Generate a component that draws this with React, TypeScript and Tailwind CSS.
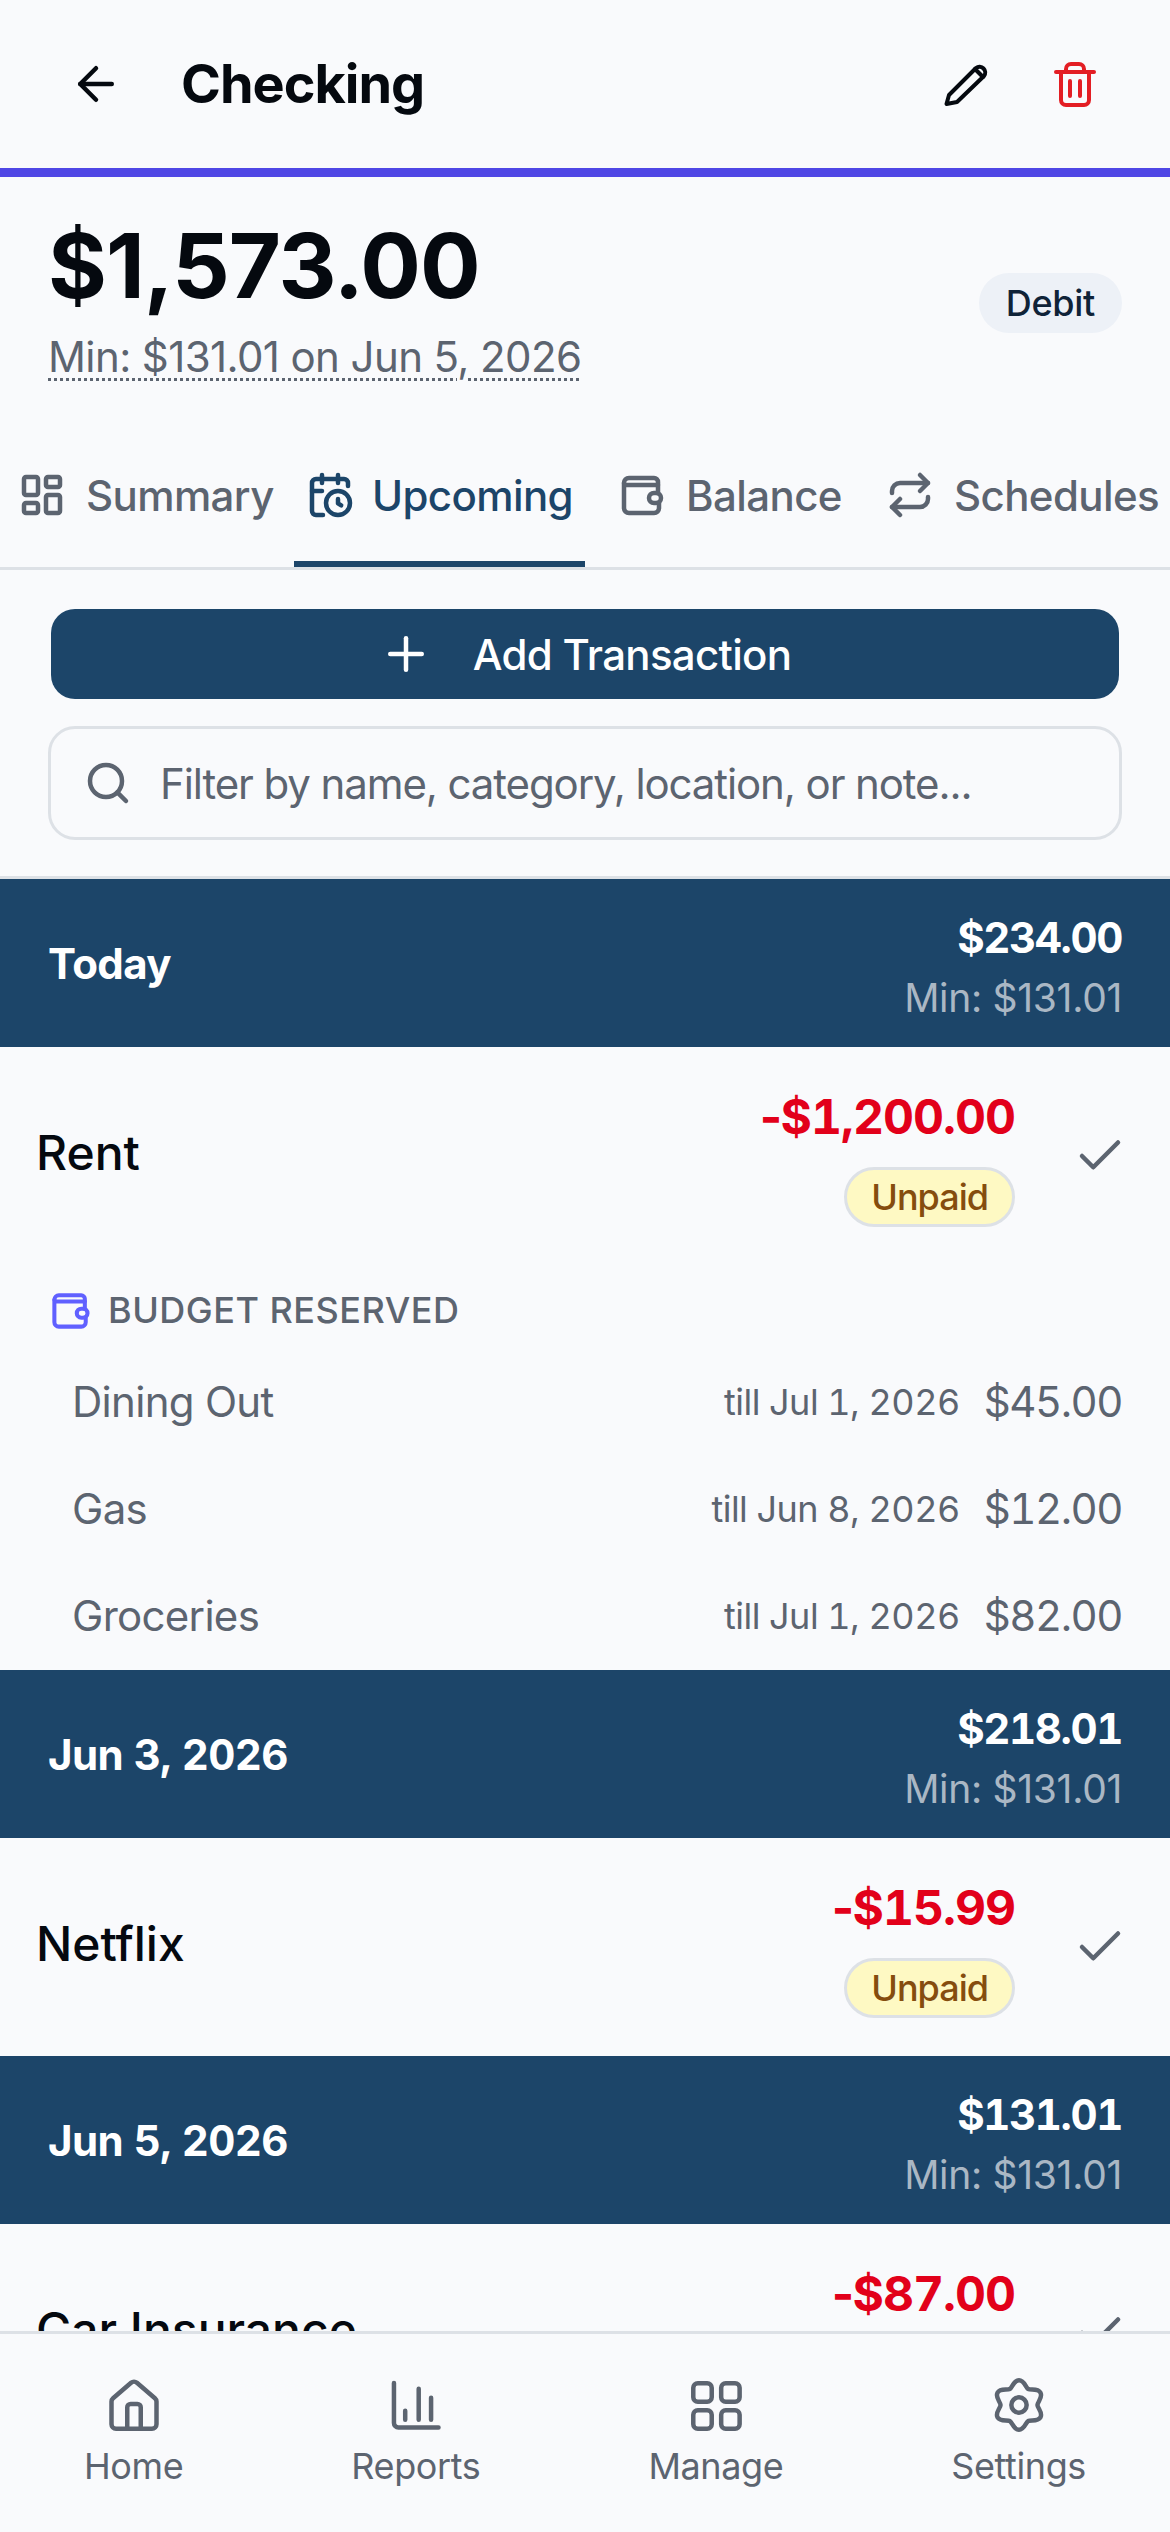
import React from 'react';
import { ArrowLeft, CalendarClock, Check, LayoutDashboard, Plus, Repeat, Search } from 'lucide-react';

const font = { fontFamily: 'Inter, "Noto Sans", sans-serif' };

function Pencil() {
  return (
    <svg width="54" height="54" viewBox="0 0 54 54" fill="none" stroke="currentColor" strokeWidth="4" strokeLinejoin="round" strokeLinecap="round">
      <path d="M7.5 47l2.5-9L37 11a5.7 5.7 0 0 1 8 8L18 45z" />
      <path d="M36 12l8 8" />
    </svg>
  );
}

function Trash() {
  return (
    <svg width="54" height="54" viewBox="0 0 54 54" fill="none" stroke="currentColor" strokeWidth="4" strokeLinecap="round">
      <path d="M8 15h38" />
      <path d="M18 15v-3a5 5 0 0 1 5-5h8a5 5 0 0 1 5 5v3" />
      <path d="M13 15v28a5 5 0 0 0 5 5h18a5 5 0 0 0 5-5V15" />
      <path d="M22 24v15M32 24v15" />
    </svg>
  );
}

function Wallet({ size = 48 }: { size?: number }) {
  return (
    <svg width={size} height={size} viewBox="0 0 24 24" fill="none" stroke="currentColor" strokeWidth="2.25" strokeLinecap="round" strokeLinejoin="round">
      <path d="M3 6a2.5 2.5 0 0 1 2.5-2.5H18A2 2 0 0 1 20 5.500V11" />
      <path d="M3 6v12.500A2.500 2.500 0 0 0 5.500 21H18a2.500 2.500 0 0 0 2.500-2.500V16" />
      <path d="M3.500 7H20" />
      <rect x="15.500" y="11" width="6" height="5" rx="2.500" />
    </svg>
  );
}

function HomeIcon() {
  return (
    <svg width="54" height="54" viewBox="0 0 24 24" fill="none" stroke="currentColor" strokeWidth="2" strokeLinecap="round" strokeLinejoin="round">
      <path d="M2 10.500a2 2 0 0 1 .7-1.500l8-6.900a2 2 0 0 1 2.600 0l8 6.900a2 2 0 0 1 .7 1.500v10a2 2 0 0 1-2 2H4a2 2 0 0 1-2-2z" />
      <path d="M9 22.500V13a1.500 1.500 0 0 1 1.500-1.500h3A1.500 1.500 0 0 1 15 13v9.500" />
    </svg>
  );
}

function ReportsIcon() {
  return (
    <svg width="54" height="54" viewBox="0 0 24 24" fill="none" stroke="currentColor" strokeWidth="2" strokeLinecap="round" strokeLinejoin="round">
      <path d="M2.200 2.200V20a2 2 0 0 0 2 2H22" />
      <path d="M7.200 14.500v4M13.200 4.800v13.700M18.700 8.800v9.700" />
    </svg>
  );
}

function ManageIcon() {
  return (
    <svg width="54" height="54" viewBox="0 0 24 24" fill="none" stroke="currentColor" strokeWidth="2">
      <rect x="1.900" y="2.300" width="8.200" height="8.200" rx="2" />
      <rect x="14.300" y="2.300" width="8.200" height="8.200" rx="2" />
      <rect x="1.900" y="14.300" width="8.200" height="8.200" rx="2" />
      <rect x="14.300" y="14.300" width="8.200" height="8.200" rx="2" />
    </svg>
  );
}

// six lobes, so lucide's Settings doesn't fit
function gearPath() {
  let d = '';
  for (let i = 0; i < 6; i++) {
    const a = (-90 + i * 60) * (Math.PI / 180);
    const v = a + (30 * Math.PI) / 180;
    const n = a + (60 * Math.PI) / 180;
    const p = (r: number, t: number) => [12 + r * Math.cos(t), 12 + r * Math.sin(t)];
    const tan = (t: number, l: number) => [-Math.sin(t) * l, Math.cos(t) * l];
    const tip = p(11, a);
    const val = p(8.2, v);
    const nxt = p(11, n);
    const ta = tan(a, 2.4);
    const tv = tan(v, 1.3);
    const tn = tan(n, 2.4);
    if (i === 0) d += `M${tip[0]} ${tip[1]}`;
    d += `C${tip[0] + ta[0]} ${tip[1] + ta[1]} ${val[0] - tv[0]} ${val[1] - tv[1]} ${val[0]} ${val[1]}`;
    d += `C${val[0] + tv[0]} ${val[1] + tv[1]} ${nxt[0] - tn[0]} ${nxt[1] - tn[1]} ${nxt[0]} ${nxt[1]}`;
  }
  return d + 'Z';
}

function GearIcon() {
  return (
    <svg width="54" height="54" viewBox="0 0 24 24" fill="none" stroke="currentColor" strokeWidth="2">
      <path d={gearPath()} />
      <circle cx="12" cy="12" r="3.400" />
    </svg>
  );
}

function DayHeader({ label, balance }: { label: string; balance: string }) {
  return (
    <div className="flex h-[168px] shrink-0 items-center justify-between pl-[48px] pr-[48px] bg-[#1c4569]">
      <span className="text-[42px] font-bold tabular-nums tracking-[-0.6px] text-white">{label}</span>
      <div className="flex flex-col items-end pt-[6px]">
        <span className="text-[42px] leading-[60px] font-bold tabular-nums tracking-[-1.400px] text-white">{balance}</span>
        <span className="mt-[3px] text-[39px] leading-[54px] tracking-[-0.3px] text-[#aab7c4]">Min: $131.01</span>
      </div>
    </div>
  );
}

function TxRow({ name, amount }: { name: string; amount: string }) {
  return (
    <div className="flex h-[218px] shrink-0 items-center pl-[36px] pr-[43px]">
      <span className="flex-1 pb-[6px] text-[48px] font-medium text-[#05090f]">{name}</span>
      <div className="flex flex-col items-end self-start pt-[34px]">
        <span className="text-[48px] leading-[72px] font-bold tabular-nums tracking-[-1px] text-[#e2001a]">
          <span className="tracking-[-6px]">-</span>
          {amount}
        </span>
        <span className="mt-[14px] flex h-[60px] items-center rounded-full border-[3px] border-[#dde1e6] bg-[#fef9c3] px-[24px] text-[36px] font-medium tracking-[-1px] text-[#854d0e]">Unpaid</span>
      </div>
      <Check size={54} strokeWidth={2} className="ml-[58px] text-[#5c6470]" />
    </div>
  );
}

function ReservedRow({ name, till, amount }: { name: string; till: string; amount: string }) {
  return (
    <div className="flex h-[107px] items-center pl-[72px] pr-[48px] pt-[2px] text-[#5c6470]">
      <span className="flex-1 text-[42px] tracking-[-0.7px]">{name}</span>
      <span className="text-[36px] tabular-nums tracking-[-0.5px]">{till}</span>
      <span className="ml-[24px] text-[42px] tabular-nums tracking-[-1.500px]">{amount}</span>
    </div>
  );
}

function Tab({ icon, label, active, className }: { icon: React.ReactNode; label: string; active?: boolean; className: string }) {
  return (
    <div className={`flex h-full shrink-0 items-center border-b-[6px] pb-[24px] pl-[12px] ${active ? 'border-[#1c4569] text-[#1c4569]' : 'border-transparent text-[#5c6470]'} ${className}`}>
      {icon}
      <span className="text-[42px] font-medium tracking-[-0.6px] whitespace-nowrap">{label}</span>
    </div>
  );
}

function NavItem({ icon, label }: { icon: React.ReactNode; label: string }) {
  return (
    <div className="flex flex-col items-center text-[#5c6470]">
      {icon}
      <span className="mt-[7px] text-[36px] leading-[54px] tracking-[-0.4px]">{label}</span>
    </div>
  );
}

export default function App() {
  return (
    <div className="flex h-[2532px] w-[1170px] flex-col overflow-hidden bg-[#f9fafc] text-[#05090f]" style={font}>
      <header className="flex h-[168px] shrink-0 items-center pl-[69px] pr-[68px]">
        <ArrowLeft size={54} strokeWidth={2} />
        <h1 className="ml-[58px] flex-1 pb-[2px] text-[54px] font-bold tracking-[-1px]">Checking</h1>
        <div className="text-[#05090f]"><Pencil /></div>
        <div className="ml-[55px] text-[#e31e24]"><Trash /></div>
      </header>
      <div className="h-[9px] shrink-0 bg-[#4f46e5]" />

      <section className="flex h-[210px] shrink-0 items-start justify-between px-[48px]">
        <div className="pt-[35px]">
          <div className="text-[90px] leading-[108px] font-bold tracking-[-1px]">$1,573.00</div>
          <div className="mt-[13px] text-[42px] leading-[48px] tracking-[-0.6px] text-[#5c6470] underline decoration-dotted decoration-[3px] underline-offset-[6px]">Min: $131.01 on Jun 5, 2026</div>
        </div>
        <span className="mt-[96px] flex h-[60px] items-center rounded-full bg-[#edf1f7] px-[27px] text-[36px] font-medium tracking-[-0.3px] text-[#0f2338]">Debit</span>
      </section>

      <nav className="flex h-[183px] shrink-0 flex-col">
        <div className="h-[66px]" />
        <div className="flex h-[117px] items-stretch border-b-[3px] border-[#dde1e6] pl-[6px]">
          <Tab className="w-[288px] gap-[20px]" icon={<LayoutDashboard size={48} strokeWidth={2.25} />} label="Summary" />
          <Tab active className="w-[291px] gap-[18px]" icon={<CalendarClock size={48} strokeWidth={2.25} />} label="Upcoming" />
          <Tab className="ml-[21px] w-[253px] gap-[20px]" icon={<Wallet />} label="Balance" />
          <Tab className="ml-[15px] w-[296px] gap-[20px]" icon={<Repeat size={48} strokeWidth={2.25} />} label="Schedules" />
        </div>
      </nav>

      <div className="flex shrink-0 flex-col px-[48px] pb-[36px] pt-[39px]">
        <button className="mx-[3px] flex h-[90px] items-center justify-center gap-[40px] rounded-[24px] bg-[#1c4569] text-[42px] font-medium tracking-[-0.7px] text-white">
          <Plus size={54} strokeWidth={2} />
          Add Transaction
        </button>
        <div className="mt-[27px] flex h-[114px] items-center rounded-[27px] border-[3px] border-[#dde1e6] pl-[33px] text-[#5c6470]">
          <Search size={48} strokeWidth={2.25} />
          <span className="ml-[28px] text-[42px] tracking-[-1.100px]">Filter by name, category, location, or note...</span>
        </div>
      </div>

      <div className="flex min-h-0 flex-1 flex-col overflow-hidden border-t-[3px] border-[#dde1e6]">
        <DayHeader label="Today" balance="$234.00" />
        <TxRow name="Rent" amount="$1,200.00" />
        <div className="flex shrink-0 flex-col pb-[2px] pt-[20px]">
          <div className="mb-[12px] flex h-[50px] items-center pl-[49px]">
            <span className="text-[#6060ff]"><Wallet size={43} /></span>
            <span className="ml-[16px] text-[36px] font-medium tracking-[0.5px] text-[#5c6470]">BUDGET RESERVED</span>
          </div>
          <ReservedRow name="Dining Out" till="till Jul 1, 2026" amount="$45.00" />
          <ReservedRow name="Gas" till="till Jun 8, 2026" amount="$12.00" />
          <ReservedRow name="Groceries" till="till Jul 1, 2026" amount="$82.00" />
        </div>
        <DayHeader label="Jun 3, 2026" balance="$218.01" />
        <TxRow name="Netflix" amount="$15.99" />
        <DayHeader label="Jun 5, 2026" balance="$131.01" />
        <TxRow name="Car Insurance" amount="$87.00" />
      </div>

      <footer className="flex h-[201px] shrink-0 justify-around border-t-[3px] border-[#dde1e6] pt-[44px]">
        <NavItem icon={<HomeIcon />} label="Home" />
        <NavItem icon={<ReportsIcon />} label="Reports" />
        <NavItem icon={<ManageIcon />} label="Manage" />
        <NavItem icon={<GearIcon />} label="Settings" />
      </footer>
    </div>
  );
}
